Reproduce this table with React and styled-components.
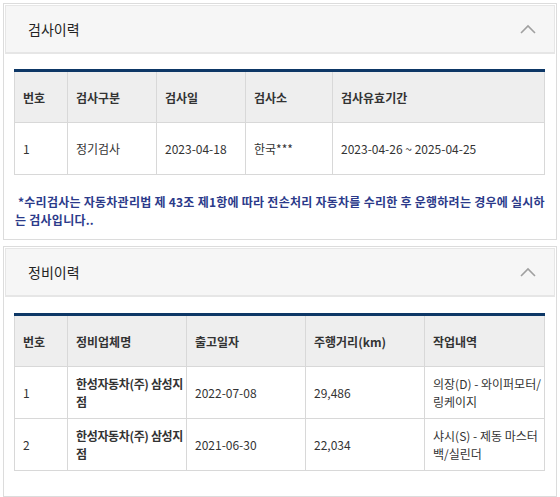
import React from "react";
import styled, { createGlobalStyle } from "styled-components";

const GlobalStyle = createGlobalStyle`
  body {
    margin: 0;
    background: #ffffff;
    font-family: "Noto Sans CJK KR", "Noto Sans", sans-serif;
    color: #333;
  }
`;

const inspections = [
  { no: 1, kind: "정기검사", date: "2023-04-18", place: "한국***", period: "2023-04-26 ~ 2025-04-25" },
];

const repairs = [
  { no: 1, shop: "한성자동차(주) 삼성지점", date: "2022-07-08", km: "29,486", work: "의장(D) - 와이퍼모터/링케이지" },
  { no: 2, shop: "한성자동차(주) 삼성지점", date: "2021-06-30", km: "22,034", work: "샤시(S) - 제동 마스터백/실린더" },
];

const Page = styled.div`
  display: flex;
  flex-direction: column;
  gap: 6px;
  padding: 3px 3px 0;
`;

const Panel = styled.section`
  border: 1px solid #dcdcdc;
  background: #fff;
  padding-bottom: ${(p) => p.$bottom}px;
`;

const Header = styled.div`
  display: flex;
  align-items: center;
  justify-content: space-between;
  height: 46px;
  margin: 1px 1px 0;
  padding: 0 18px 0 22px;
  background: #f6f6f6;
  border: 1px solid #e6e6e6;
  border-bottom-width: 2px;
`;

const Title = styled.h3`
  margin: 0;
  font-size: 14px;
  font-weight: 400;
  color: #222;
`;

const Body = styled.div`
  padding: ${(p) => p.$top}px 11px 0 10px;
`;

const Table = styled.table`
  width: 100%;
  border-collapse: collapse;
  table-layout: fixed;
  border-top: 3px solid #0d3766;
  font-size: 12px;
`;

const Th = styled.th`
  height: 50px;
  padding: 0 3px 0 8px;
  text-align: left;
  font-weight: 700;
  color: #333;
  background: #eeeeee;
  border: 1px solid #d8d8d8;
  border-top: none;
`;

const Td = styled.td`
  height: 51px;
  padding: 0 0 0 8px;
  text-align: left;
  vertical-align: middle;
  line-height: 18px;
  word-break: break-all;
  color: #333;
  font-weight: ${(p) => (p.$bold ? 700 : 400)};
  letter-spacing: ${(p) => (p.$bold ? "-0.35px" : "0")};
  border: 1px solid #d8d8d8;
`;

const Note = styled.p`
  margin: 18px 0 0 1px;
  font-size: 12px;
  line-height: 18px;
  font-weight: 700;
  letter-spacing: 0.25px;
  word-break: break-all;
  color: #2b3a8a;
`;

const Chevron = () => (
  <svg width="16" height="10" viewBox="0 0 16 10">
    <path d="M1 9 L8 2 L15 9" fill="none" stroke="#a0a0a0" strokeWidth="1.6" />
  </svg>
);

export default function App() {
  return (
    <>
      <GlobalStyle />
      <Page>
        <Panel $bottom={10}>
          <Header>
            <Title>검사이력</Title>
            <Chevron />
          </Header>
          <Body $top={15}>
            <Table>
              <colgroup>
                <col style={{ width: 53 }} />
                <col style={{ width: 89 }} />
                <col style={{ width: 89 }} />
                <col style={{ width: 87 }} />
                <col />
              </colgroup>
              <thead>
                <tr>
                  <Th>번호</Th>
                  <Th>검사구분</Th>
                  <Th>검사일</Th>
                  <Th>검사소</Th>
                  <Th>검사유효기간</Th>
                </tr>
              </thead>
              <tbody>
                {inspections.map((r) => (
                  <tr key={r.no}>
                    <Td>{r.no}</Td>
                    <Td>{r.kind}</Td>
                    <Td>{r.date}</Td>
                    <Td>{r.place}</Td>
                    <Td>{r.period}</Td>
                  </tr>
                ))}
              </tbody>
            </Table>
            <Note>
              &nbsp;*수리검사는 자동차관리법 제 43조 제1항에 따라 전손처리 자동차를 수리한 후 운행하려는 경우에 실시하는 검사입니다..
            </Note>
          </Body>
        </Panel>
        <Panel $bottom={25}>
          <Header>
            <Title>정비이력</Title>
            <Chevron />
          </Header>
          <Body $top={16}>
            <Table>
              <colgroup>
                <col style={{ width: 53 }} />
                <col style={{ width: 119 }} />
                <col style={{ width: 119 }} />
                <col style={{ width: 119 }} />
                <col />
              </colgroup>
              <thead>
                <tr>
                  <Th>번호</Th>
                  <Th>정비업체명</Th>
                  <Th>출고일자</Th>
                  <Th>주행거리(km)</Th>
                  <Th>작업내역</Th>
                </tr>
              </thead>
              <tbody>
                {repairs.map((r) => (
                  <tr key={r.no}>
                    <Td>{r.no}</Td>
                    <Td $bold>{r.shop}</Td>
                    <Td>{r.date}</Td>
                    <Td>{r.km}</Td>
                    <Td>{r.work}</Td>
                  </tr>
                ))}
              </tbody>
            </Table>
          </Body>
        </Panel>
      </Page>
    </>
  );
}
